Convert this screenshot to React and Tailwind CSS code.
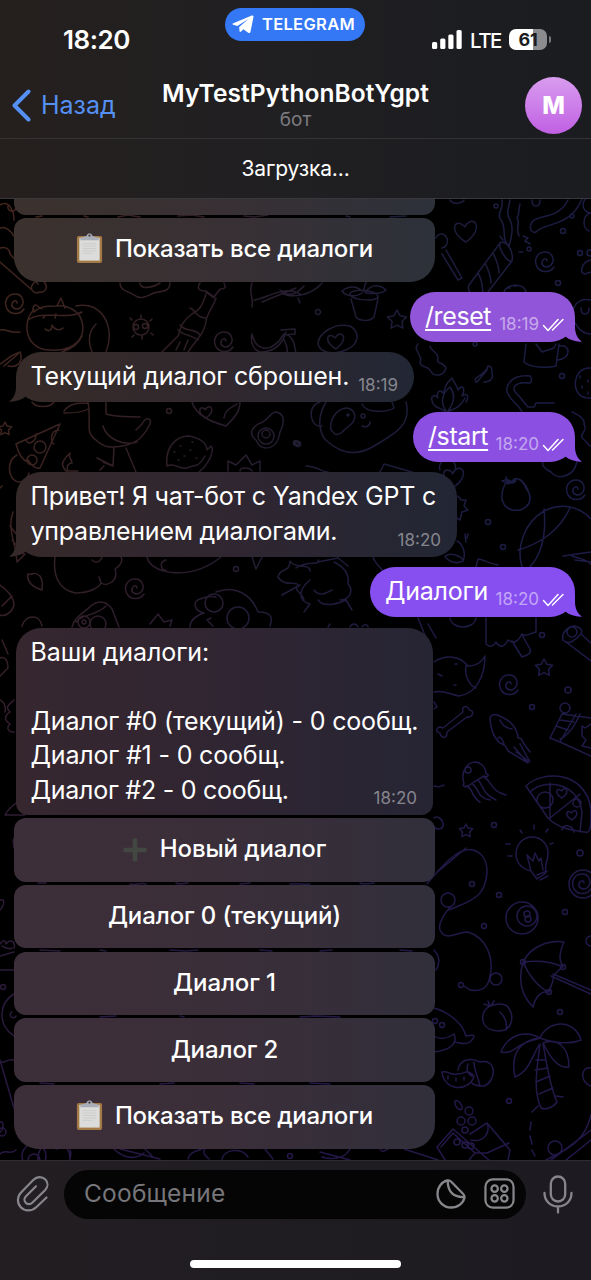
import React from "react";

const star = (x, y, r) => {
  const p = [];
  for (let i = 0; i < 10; i++) {
    const a = (i * Math.PI) / 5 - Math.PI / 2;
    const q = i % 2 ? r * 0.52 : r;
    p.push(`${(x + q * Math.cos(a)).toFixed(1)} ${(y + q * Math.sin(a)).toFixed(1)}`);
  }
  return `M${p.join("L")}Z`;
};
const spiral = (x, y) =>
  `M${x + 9} ${y + 5}c-4 6-13 6-17 0c-4-8 1-15 8-15c8 0 10 9 6 13c-4 4-10 1-9-3c1-4 5-4 5-1`;
const heart = (x, y, s) =>
  `M${x} ${y + s}C${x - s * 1.7} ${y} ${x - s} ${y - s * 1.3} ${x - s * 0.1} ${y - s * 0.4}C${x + s * 0.6} ${y - s * 1.6} ${x + s * 1.8} ${y - s * 0.3} ${x} ${y + s}Z`;
const dot = (x, y, r = 2.5) => `M${x - r} ${y}a${r} ${r} 0 1 0 ${2 * r} 0a${r} ${r} 0 1 0 ${-2 * r} 0`;

const doodles = [
  // left column, top
  "M0 205c10-6 14 8 14 15M0 228c6-2 10 2 14 8M8 206a4 4 0 1 0 8 2",
  "M0 248c6-2 10 2 10 6L38 284M0 262L32 290M32 290c-3-6 8-14 13-7c4 6-2 10-5 9c-4 2-7 0-8-2",
  spiral(15, 304),
  "M34 310C22 320 24 350 50 350C76 352 86 336 82 322C80 312 68 304 56 306C46 306 40 306 34 312C32 312 33 304 36 305L42 309M57 306L61 298L65 308M43 318l2-2M55 318l1-4M45 329c3 3 7 2 7-4c2 5 8 6 11 3M28 320c14-10 40 0 54-8",
  "M76 306c26-6 40 22 30 46M82 336C78 346 68 350 62 352M96 324c-8 8-8 18-4 28M64 352l2-4",
  "M0 330c6-2 10 4 20 2M0 364c6-3 8-8 20-12c4 10-3 16-12 14M18 354L4 366",
  dot(141, 327, 8), dot(136, 327), dot(145, 326), "M132 320l-2-2M141 318v-3M150 321l2-2M151 333l2 2M134 335l-2 2M142 336v3",
  "M120 283c0 8 8 8 14 12c8 6 14 0 20-2c10-2 16-2 16-10M140 283c0 6 10 6 20 0",
  "M200 283c-4 6 0 8 6 8l8 6l6-8c6 0 6-2 4-6M206 294c-4 12-6 16-14 20c-12 8-12 18-14 22l-16 16M216 298c-2 8-10 16-10 24c-2 12-10 18-18 30M190 308c6 2 6 10 16 10M180 325c6 8 14 2 20 10M178 330c6 6 12 4 20 10M180 342l-4 8M188 340l-4 10M206 292l8 6",
  spiral(224, 342), "M252 334c4 18 20 20 32 0M252 334c-2 10 2 16 8 18c12 0 22-6 26-20M281 330l14-1v5l-12 1M288 335c8 6 6 12 8 18M284 340c2 4 4 8 3 12",
  "M252 283c-4 10 2 14 0 24M254 300c10 0 30-16 46-6M262 302l34-14M280 290c10 8 16 4 24-4",
  "M282 293c10 6 30 2 40-10M298 298l2 5", dot(318, 312),
  "M350 294c0-6 26-4 28 2c2 6-26 5-28-2ZM351 299l5 18c3 4 14 5 18 0l4-18M362 291c-8-8-18-2-20 0c4 6 14 6 20 2M364 292c0-10 4-12 6-12M366 292c6-10 16-6 20-2c-4 4-12 4-20 3",
  star(397, 320, 10), "M318 344c0-10 16-22 32-18c10 6 10 18-4 24c-14 6-26 2-28-6Z", heart(336, 341, 8),
  heart(466, 231, 11), "M436 238a6 7 0 1 1 6 10M446 250l16 28l-4 2l-16-26",
  "M502 200c2 8-6 14-1 20c6 8 0 20 8 26M510 200c-2 10-4 14 0 20c4 6 2 16-1 26M520 204c-2 6 0 10-3 14c4 6-2 8 2 18",
  "M532 222c-4 6 0 12 4 10c8-10 34-4 46-33M532 222c6-8 26-2 36-22M450 200c4 6 14 2 14 0M532 200c0 8 8 8 8 0",
  dot(496, 206, 2), dot(563, 231), dot(572, 216, 2), dot(558, 283), dot(591, 205, 8), "M591 213c-10 2-8 16-2 18",
  "M500 243c6-4 14 8 12 18c-4 2-14-12-12-18ZM500 243l-31 42c-3 6 5 13 10 14M512 261l-24 31M493 253c2 4 6 12 6 20M485 263c3 6 6 12 6 20M478 273c4 6 4 12 5 20M523 236l5 2l-3 3l5 3M500 236l3 4M519 252h4",
  spiral(545, 262), dot(529, 249, 2), dot(580, 253), dot(590, 253, 3), "M591 260c-10 2-12 14-6 14l6-2", "M504 292c2-8 20-10 22 0M508 288h2M514 286h2",
  "M591 300c-16-4-24 14-14 26c4 6 10 8 14 8M581 308c0 8 8 8 8 0",
  // left column, middle
  "M16 444L60 424l-20 44c-6 2-12-8-12-8M16 444c2 8 6 16 12 18M26 440c2 6 10 2 10-6M59 430c-10 0-8 14-5 14", dot(40, 447, 6), dot(32, 460, 5),
  "M17 455c-8 4-10 16-4 24c6 6 14 2 16-6", star(5, 429, 7), "M64 411c6-8 14-8 24-8M64 413c8 0 18 0 24-4M88 402c4 20-4 30 8 38c8 8 16 8 26 6c12-2 20-6 28-22c2-6-4-8-8 0l-6 6M106 402v12c14 4 26 2 34 3M103 426c4 14 22 20 34 16M114 448l-1 18l-16-8M113 466l-10-4M126 448l10 24M104 466l-4 4",
  "M66 471c-6-6-4-10 4-18c-2 6 2 6 2 10c-4 0-6 4-4 8M66 471h12", "M32 402c4 6 18 6 22 0",
  "M167 466c-2-18 8-30 22-30c12 2 18 8 18 14l4-4c4 4-2 18-12 26M167 466c8-4 12 4 20 2c6-4 10 2 18-12M174 452h1M180 446h1M190 450h1M184 456h1M196 458h1M176 440h1M192 442h1M178 460h1",
  "M256 440c-8-6-4-12 2-16c10-2 12-12 18-12c10 2 8 12 4 20c-2 12-8 16-14 16c-6 0-8-4-10-8Z", dot(266, 436, 8), dot(266, 434, 4), dot(169, 411), dot(297, 443, 2),
  "M192 402c4 14 20 20 34 24c8-8 14-14 14-24M224 418c0-8 10-12 13-14", heart(206, 412, 6),
  "M228 471v-10l8 4l10-10l6 10l8-4v10M240 471c0-4 10-4 12 0",
  "M320 402c-14 4-10 26 2 24M326 402c-12 20-4 36 2 40c14 12 30 14 46 4c20-12 38-20 32-44M331 430c-2-10 6-22 16-22c10 2 10 12 2 18c-6 4-8 10-14 8ZM362 404c4 10 26 8 32 4l-2-6M362 426c4 2 8 0 8-4", dot(348, 415, 1), dot(363, 416, 2), dot(296, 443),
  "M418 344c-6 6 6 12 2 18c0 6 8 4 10 8c4 8 14 6 16-2c-4-8-10-2-8-10c0-6-8-8-8-12",
  "M432 400c-2-4 4-6 6-2c-2-6 2-10 6-4c0-10 6-14 8-16c4 8 6 10 6 12c4-6 8-2 4 6c4-4 8 0 4 6M446 411c-6-8-4-18 4-24c6 8 4 16-2 24M432 400c0 6 6 8 14 11M465 398c-4 8-8 10-16 13M430 416c4-4 20-6 34 0",
  "M476 382c-4-6 10-6 12-16c4 0 4 4 4 8c2 4-2 8-8 8M477 382l10-12", dot(562, 376), dot(475, 344, 2),
  "M526 344l-2 18c6 6 24 6 32 4l3-22M560 346c10-2 12 12-2 14M536 344l6 8l12-4l2-4",
  "M530 376c-20-2-26 12-22 18c4 8 12 12 14 18M530 383c-16-2-20 6-12 12c4 4 6 8 10 12h6l2-4h18M530 376c2 2 2 5 0 7",
  "M591 368c-18-2-22 28-4 30h4M580 376v2M588 380v2M582 386v2M588 392v2",
  "M572 412c4 2 14 6 12 12c4 8-4 8-2 14c6 4 6 8 9 8", dot(298, 444),
  "M306 466c10 0 16 6 22 6M380 472l4-8l28 8M440 470a8 8 0 1 1 12 4M543 462c-2 4 4 8 8 10c6 8 22 6 26-10",
  // middle band
  "M0 488l2-2M13 512c-6 16 2 28 4 50l8-8M10 526l14 18M12 540l12 14",
  "M55 557c-2 16 2 32 20 36c16 0 24-6 26-10c6 4 18-2 14-14c6-4 8-8 6-12M101 583l-2-6M92 560c4 4 8 2 10-3",
  "M42 590c-8-2-16-8-14-16c6 2 4-4 12 2c4 6 2 8 2 14Z", spiral(135, 589), "M0 585c6 4 14 12 14 20c-2 8-10 12-14 10M2 606l10-10",
  "M147 557c4 18 44 24 74 0M166 560c-8 2-4 12 0 10M252 557l4 12l6-12", dot(236, 569),
  "M278 577c2-10 12-4 12-16c4 8 20 2 20 10M278 577c6 10 18 4 20 8c-4 6 2 6 6 14M300 585l-18 10",
  "M72 627c2-10 12-14 20-22c8-6 16-2 20 4l7 18M76 622c6-8 20-6 30-16", dot(84, 622, 6), dot(98, 624, 8), dot(84, 622, 2),
  "M22 626c4-12 18-12 20 0M150 624l8-10l6 8l8-2l-2 6M190 627c0-8 8-12 14-14c-10-2-12-12-4-14c10-4 14-2 16-2M216 592c20-8 36 4 42 20c16 0 14 8 12 14M213 626l-6-6l4-2", dot(214, 603, 9), dot(238, 618, 11),
  "M296 568c10-8 26-2 22-8M310 580c-10 8-14 20 0 24l-6 8M318 600c6 8 20 4 28 0l6 10M340 600c10 0 14-10 8-16c2-12-6-18-14-22M318 562l20-4l10 8M314 590c6 8 14 2 18 0M374 557c-4 0 10 16 16 20",
  heart(454, 477, 10), "M458 496l3 4l5 0l-2 6l4 4l-6 2l-2 8l-5-3", "M457 541c4 2 10 10 6 20c-8 4-14 0-18-4M445 556c6-4 16 0 18 4M465 534l1 8M468 534l-1 4",
  "M506 482c-10 20 0 30 14 28c12-4 12-14 6-22c-4-10-12-12-14-6c-6-4-6-2-10-1c6 4 12 2 14 0ZM508 484l-2-7M512 482c4-6 10-4 16 8", spiral(576, 490), dot(488, 522), dot(503, 547),
  "M522 567c-6-20 2-44 22-56c16-8 34-6 47 8M544 509c2 20 0 42-14 58M570 508c-10 22-30 36-52 42M591 552l-28 4M575 560l16 2M572 556c4 2 12 2 19 8",
  "M476 567l2-8c4 0 10 4 20 6M450 618c2 12 24 12 26 0M486 618v26c4 4 8 2 10-2c4 6 8 6 12-2c6 4 10 2 14-6c4 4 10-2 14-2V618M512 641l10 16c6-2 10-4 8-8l-8-14", dot(542, 635),
  "M563 640c-2-8 6-14 12-14c6 2 8 4 6 8M563 640c6 6 12 0 18-6M566 642l25 19M581 634l10 9", dot(572, 632, 5),
  "M328 627l2-3M350 627c2-4 6-4 8 0M362 627c2-4 6-2 6 0M418 618l8 20M428 624l8 14",
  // right column, lower
  "M434 662c12-8 26-6 34 4c8 0 14-4 17-10c0 18-8 38-26 40c-10-2-16-6-25-4M466 666c-2 10 4 20 10 22M455 664h2M454 685h2M438 674l4 2",
  star(544, 668, 9), spiral(509, 685), dot(568, 690, 3), dot(532, 707), "M434 702l3 5l-3 2",
  "M443 728l20-16c-2-8 6-6 6-2c6 0 4 8-2 7l-20 15c0 8-6 6-7 1c-6-1-3-8 3-5Z",
  "M490 718c2-8 14 0 20 4c6 6 8 10 8 16c4 0 4 2 6 6l6 8M490 718c0 10 4 20 10 25c6 2 6 4 8 8l20 12l-14-16M500 720c2 6 6 8 12 9M498 738c2-2 4 0 6 6M516 752l14 10M520 744l10 18",
  "M550 738l12-24l29 4M550 738l10 4l16-28M560 742l31 14M556 726l12 4M560 720l14 2M580 714c-4 10-12 22-20 25M591 724l-6 4l-3-2v10l4 4l-4 6l9 2", dot(565, 708, 5),
  "M434 818c2-2 10 0 9 8c-1 4-8 4-9 0M434 786c6 2 8 0 10-1",
  "M464 784c-4-14 4-22 12-22c8 2 10 8 10 12c4 0 2 4-2 2l-10 6l-6 4c-4 2-6-1-4-2ZM466 786c8 2 4 10 14 16M472 784c8 4 4 14 18 16M478 780c6 6 4 14 18 20M484 777c8 4 6 14 22 18", dot(468, 770, 3),
  "M526 786c16-16 60-16 65 24v10c0 8-2 14-6 12M526 786l4 6c14-14 48-10 52 20l-2 20M530 792l18 26c10 10 22 12 36 14M550 783v35l30-24M574 832c-2-8-12-8-12-2", dot(545, 800, 8), heart(562, 793, 5), heart(572, 815, 5), dot(577, 803, 4),
  star(466, 831, 7), dot(494, 825), dot(580, 853, 3),
  "M516 855c0-12 8-18 16-18c10 0 16 8 16 16c0 10-4 10-2 20l-9 6l-6-8c-8-2-14-6-15-16ZM531 871l-4-16l6 6l2-8l4 8l2-3l2 12M537 875l10-4M540 880l8-4M534 829v-4M546 832l2-3M522 833l-2-3M510 844h-4M512 856h-4M550 844l3-1",
  spiral(582, 884), dot(583, 884, 14), "M427 884c10-12 30-38 46-34c20 6 16 36 4 46c-10 8-20 10-28 14M428 880l38-32", dot(448, 900, 7), dot(472, 884), dot(499, 895),
  dot(522, 918, 16), dot(527, 916, 10), dot(527, 914, 3), dot(528, 919, 3), dot(484, 926), dot(565, 912), dot(591, 941, 5),
  "M454 904c-10 8-16 20-14 26c6 12 16 2 28 2c20 6 26 28 22 44c-2 12-8 16-20 14l-6-4", dot(496, 979, 6), dot(461, 985),
  "M523 962c8-16 26-22 41-20c-4 8-6 18-1 24l-10 10c2 4-2 8-4 16c-8-2-14 6-16 15c-10-10-16-24-10-45ZM523 962c18-2 30 0 40 5M523 962c6 14 16 26 26 30M551 976l40 18M553 974l38 16", dot(523, 962), dot(563, 967), dot(549, 992),
  "M490 1006c-10 4-12 24 8 25c16 0 16-16 10-24c-4-4-10-4-18-1ZM490 1006l-6-2M490 1006l-2-5M491 1006l3-5M500 1012c4 4 8 10 6 18", dot(560, 1012),
  "M434 1008c14 4 28 14 32 28c10-2 10 0 4 6c-6 4-12 0-16 0M434 1036c6 4 14 2 20-2c4 10-4 16-20 18M434 950c6 6 6 14 2 20", dot(442, 1025), dot(435, 1021),
  "M442 1072c6-2 8 4 16 2c8 0 8-6 16 2c-4 16-30 16-32-4ZM458 1070c2-12 14-12 22-8c18-4 16 20 4 24c-4 0-10 0-12-3M474 1062c0 8 4 14 6 24M468 1064c-2 6 0 10 4 12M448 1076v3M456 1078v3M464 1077v3",
  "M540 1038c-14-8-32-4-39 14c10 2 14-4 20-7c6-4 12-4 19-7M540 1038c-20 2-30 16-25 39c14-6 16-18 24-32M540 1038c8-18 34-20 41 2c-10 4-26 4-41-2M543 1043c14-6 26 4 26 24c-12 2-20-12-26-24M540 1044c-2 20-8 44 1 64c4 2 12 0 16-6c-8-18-10-38-14-58M536 1060l9 0M535 1070l13-2M536 1082l14-6M539 1094l14-6M556 1096l7 1M538 1106l-6 6",
  "M531 1122l-1 8M530 1136l2 8M532 1150l3 6M591 1068c-12-2-10 16 0 18", dot(509, 1101),
  "M455 1101c3-2 8 4 7 8c-4 2-8-4-7-8Z", dot(469, 1111, 4), dot(461, 1121, 4), dot(472, 1121, 4), dot(465, 1130, 3), dot(457, 1142, 3), dot(465, 1145, 3), dot(471, 1146, 3),
  "M437 1147l16-18l36 31M437 1147l8 13M441 1147l12-14l22 20l-6 7M470 1134l17-11l23 27l-2 10M487 1123c4 10-4 20-16 17M475 1153h12l22-10",
  "M546 1160c30-14 40-24 45-45M551 1160l40-30M566 1160l25-20", dot(555, 1148, 7),
  // left column, lower
  "M0 658c6-2 8 4 8 10l-8 8M2 640l6 14M14 700c-4 4-10 6-4 12c-6 4-6 8 0 12c-4 4-2 8 4 8M0 700c4 2 6 6 5 12",
  "M5 815c2-4 8-10 14-14M5 815h20M0 900c6-2 4 6 0 10M14 838c-2 4 0 6 0 10", "M0 944c4-6 6-2 6 0c4-6 10-2 8 4M0 956l14-4M0 970h14M2 946c4 2 8 4 10 2",
  dot(3, 987), "M14 994c-14 8-18 30 0 42M12 1012a3 3 0 1 0 4 4M0 1062c4 2 8-4 14-2M0 1060l14 48M0 1122c4-2 4 8 0 10", dot(2, 1132, 4),
  "M0 1154c6-6 10 2 16-4M56 1149c4 0 6-3 4-1M70 1150c2 4 0 6 0 9M188 1159c2-8 10-8 14-10M205 1149c-4 4 4 10 4 10M265 1149l8 10", dot(34, 1156, 12), dot(34, 1160, 6), dot(54, 1158, 16), dot(290, 1156),
  "M114 1149c8 8 20 12 30 4M120 1149l40 10M145 1149l8 8M222 1159c2-10 20-12 26-2M350 1149c-4 8-16 12-28 8M380 1149c2 4 4 2 8 0M404 1149l34 11M320 1152l30 8",
  "M38 883h8M130 884c6 2 10-2 16 0M176 883c4 2 8 0 12 0M240 884l10-1M290 884c8-1 14 1 20 0M360 883c4 2 10 0 14 0",
  "M40 950l20 1M100 950l6 1M170 950l16 1l12-1M260 950l12 1M320 951l12-1M400 950l12 1M100 1017l16-1M180 1016l4 1M300 1017l16-1l24 1M40 1083l14 1M160 1084l14-1M240 1083l14 1M310 1083l20 1",
  "M36 217l6-1M84 216l4 1M118 217l10-2l12 2M178 216l14-1l12 2M244 216l10 1l14-2M346 216l4 1M390 217l16-1",
];

function Wallpaper() {
  return (
    <svg className="absolute inset-0 h-full w-full" viewBox="0 199 591 961" fill="none" aria-hidden="true">
      <defs>
        <linearGradient id="line" gradientUnits="userSpaceOnUse" x1="0" y1="199" x2="591" y2="330">
          <stop offset="0" stopColor="#43261c" />
          <stop offset="0.35" stopColor="#2e1e26" />
          <stop offset="0.65" stopColor="#1d1c38" />
          <stop offset="1" stopColor="#1b1c46" />
        </linearGradient>
        <linearGradient id="tint" x1="0" y1="0" x2="0" y2="1">
          <stop offset="0.3" stopColor="#26164a" stopOpacity="0" />
          <stop offset="1" stopColor="#26164a" stopOpacity="0.8" />
        </linearGradient>
        <mask id="ink" maskUnits="userSpaceOnUse" x="0" y="199" width="591" height="961">
          <path d={doodles.join("")} stroke="#fff" strokeWidth="1.5" strokeLinecap="round" strokeLinejoin="round" />
        </mask>
      </defs>
      <g mask="url(#ink)">
        <rect x="0" y="199" width="591" height="961" fill="url(#line)" />
        <rect x="0" y="199" width="591" height="961" fill="url(#tint)" />
      </g>
    </svg>
  );
}

function Checks() {
  return (
    <svg className="mb-[10px] h-[14px] w-[23px]" viewBox="0 0 23 14" fill="none" stroke="#fff" strokeWidth="1.5" strokeLinecap="round" strokeLinejoin="round">
      <path d="M1.5 7.5L6 12.5L16 1.5M10.5 12L21 1.5" />
    </svg>
  );
}

function Outgoing({ text, time, color, fill, width, tracking, link }) {
  return (
    <div className={`relative mr-[16px] flex h-[50px] items-end self-end rounded-[25px] pl-[15px] ${width} ${color}`}>
      <svg className="absolute -right-[7px] bottom-0 h-[24px] w-[24px]" viewBox="0 0 24 24">
        <path className={fill} d="M17 0V9C17 16 20 21 24 23.6C18 24 12 22 8 19L0 14Z" />
      </svg>
      <span className={`relative mb-[9px] text-[25px] leading-[34px] text-white ${tracking} ${link ? "underline decoration-[1.5px] underline-offset-[4px]" : ""}`}>{text}</span>
      <span className="relative mb-[6px] ml-auto text-[17px] leading-[24px] tracking-[0px] text-white/50">{time}</span>
      <span className="relative mr-[10px] ml-[3px]"><Checks /></span>
    </div>
  );
}

function Incoming({ lines, time, box, tail }) {
  return (
    <div className={`relative ml-[16px] flex flex-col bg-linear-to-r pl-[15px] ${box}`}>
      {tail && (
        <svg className="absolute -left-[7px] bottom-0 h-[24px] w-[24px]" viewBox="0 0 24 24">
          <path d="M7 0V9C7 16 4 21 0 23.6C6 24 12 22 16 19L24 14Z" fill={tail} />
        </svg>
      )}
      {lines.map(([t, tracking], i) => (
        <span key={i} className={`relative -ml-[0.5px] h-[34.6px] text-[25px] leading-[34.6px] whitespace-nowrap text-white ${tracking}`}>{t}</span>
      ))}
      <span className="absolute right-[16px] bottom-[5px] text-[17px] leading-[24px] text-white/45">{time}</span>
    </div>
  );
}

function Clipboard() {
  return (
    <svg className="mt-[-2px] mr-[12px] h-[31px] w-[27px]" viewBox="0 0 27 32">
      <rect x="0.5" y="3" width="26" height="28" rx="2" fill="#a37a45" />
      <rect x="3" y="5" width="21" height="23.5" fill="#dcdcda" />
      <path d="M6.5 11h14M6.5 13.5h14M6.5 16h14M6.5 18.500h14M6.5 21h10" stroke="#cbccca" strokeWidth="1" />
      <path d="M4 7.500V6C4 4.500 6 4 9 3.500C10 3.300 10.500 2.700 11 1.700C11.700 0 15.300 0 16 1.700C16.500 2.700 17 3.300 18 3.500C21 4 23 4.500 23 6V7.500Z" fill="#a9adb8" />
      <circle cx="13.500" cy="2.700" r="1.200" fill="#453d3b" />
    </svg>
  );
}

function Plus() {
  return (
    <svg className="mr-[13px] h-[24px] w-[24px]" viewBox="0 0 24 24">
      <path d="M12 0.500V23.500M0.500 12H23.500" stroke="#424741" strokeWidth="4.6" />
    </svg>
  );
}

function KeyButton({ icon, children, last, tone, tracking }) {
  return (
    <div className={`ml-[14px] flex h-[63.5px] w-[421px] shrink-0 items-center justify-center bg-linear-to-r text-[24px] font-medium whitespace-nowrap text-white ${tone} ${last ? "rounded-t-[12px] rounded-b-[25px]" : "rounded-[12px]"}`}>
      {icon}
      <span className={`-mt-px ${tracking}`}>{children}</span>
    </div>
  );
}

const warm = "from-[#3b322e] via-[#383034] to-[#2d313a]";
const plum = "from-[#3d2f39] via-[#3a2e39] to-[#312f3b]";

export default function App() {
  return (
    <div className="flex h-[1280px] w-[591px] flex-col overflow-hidden bg-black font-['Inter','Noto_Sans',sans-serif]">
      <header className="flex h-[199px] shrink-0 flex-col border-b border-[#39393d] bg-linear-to-r from-[#25201e] via-[#201f22] to-[#1a1c20]">
        <div className="grid h-[73px] shrink-0 grid-cols-[225px_140px_1fr]">
          <div className="pt-[24px] pl-[63px] text-[26px] leading-[32px] font-semibold tracking-[-0.5px] text-white">18:20</div>
          <div className="mt-[8px] flex h-[33px] items-center rounded-full bg-[#3478f6] pl-[7px]">
            <svg className="h-[19px] w-[22px]" viewBox="0 0 22 19">
              <path d="M1.300 8.200L19.800 0.500C21 0.100 21.700 0.700 21.500 1.800L18.500 16.800C18.200 18 17.200 18.400 16.200 17.700L11.400 14.200L9 16.500C8.300 17.200 7.600 17 7.500 16L7.200 12L16.500 4L5.300 11L1.200 9.700C0.300 9.300 0.300 8.600 1.300 8.200Z" fill="#fff" />
            </svg>
            <span className="ml-[8px] text-[16.500px] font-semibold tracking-[0.300px] text-white">TELEGRAM</span>
          </div>
          <div className="flex items-start pt-[29px] pl-[67px]">
            <svg className="mt-[1px] h-[19px] w-[30px]" viewBox="0 0 30 19" fill="#fff">
              <rect x="0" y="12" width="5.200" height="7" rx="1.500" />
              <rect x="8.200" y="8.500" width="5.200" height="10.500" rx="1.500" />
              <rect x="16.300" y="4.500" width="5.200" height="14.500" rx="1.500" />
              <rect x="24.500" y="0" width="5.200" height="19" rx="1.500" />
            </svg>
            <span className="ml-[8px] w-[32px] text-[20.500px] leading-[23px] font-medium tracking-[-1.500px] text-white">LTE</span>
            <div className="ml-[7px] flex h-[21px] w-[38px] items-center justify-center rounded-[7px] bg-linear-to-r from-white from-62% to-[#8c8c8e] to-62% text-[18px] leading-[21px] font-bold tracking-[-0.300px] text-[#1b1c20]">61</div>
            <div className="mt-[7px] ml-[2px] h-[7px] w-[2px] rounded-r-full bg-[#77787b]" />
          </div>
        </div>
        <div className="grid h-[66px] shrink-0 grid-cols-[150px_1fr_150px] border-b border-[#333336]">
          <div className="flex items-start pt-[15px] pl-[12px] text-[#5590f4]">
            <svg className="mt-[1px] h-[33px] w-[20px]" viewBox="0 0 20 33" fill="none" stroke="currentColor" strokeWidth="4" strokeLinecap="round" strokeLinejoin="round">
              <path d="M16.500 2.500L2.500 16.500L16.500 30.500" />
            </svg>
            <span className="ml-[9px] text-[25px] leading-[34px] tracking-[0px]">Назад</span>
          </div>
          <div className="flex flex-col items-center whitespace-nowrap">
            <span className="mt-[4px] text-[24.500px] leading-[32px] font-semibold tracking-[0.080px] text-white">MyTestPythonBotYgpt</span>
            <span className="text-[19px] leading-[22px] text-[#7d7c80]">бот</span>
          </div>
          <div className="flex justify-end pt-[4px] pr-[9px]">
            <div className="flex h-[57px] w-[57px] items-center justify-center rounded-full bg-linear-to-b from-[#d99cee] to-[#c05fe3] text-[24px] font-extrabold text-white">M</div>
          </div>
        </div>
        <div className="flex flex-1 items-center justify-center text-[21px] tracking-[-0.150px] text-white">Загрузка...</div>
      </header>

      <main className="relative h-[961px] shrink-0 overflow-hidden">
        <Wallpaper />
        <div className="relative -mt-[47.500px] flex flex-col">
          <KeyButton tone={warm}>{""}</KeyButton>
          <div className="h-[3px]" />
          <KeyButton tone={warm} last icon={<Clipboard />} tracking="tracking-[-0.200px]">Показать все диалоги</KeyButton>
          <div className="h-[10.500px]" />
          <Outgoing text="/reset" time="18:19" link width="w-[165px]" color="bg-[#9055d8]" fill="fill-[#9055d8]" tracking="tracking-[-0.400px]" />
          <div className="h-[10px]" />
          <Incoming tail="#362b28" time="18:19" box="h-[50px] w-[398px] rounded-[25px] pt-[7px] from-[#362b28] via-[#31282e] to-[#222735]" lines={[["Текущий диалог сброшен.", "tracking-[-0.150px]"]]} />
          <div className="h-[10px]" />
          <Outgoing text="/start" time="18:20" link width="w-[162px]" color="bg-[#8b50e2]" fill="fill-[#8b50e2]" tracking="tracking-[-0.400px]" />
          <div className="h-[10px]" />
          <Incoming tail="#36292a" time="18:20" box="h-[85px] w-[441px] rounded-[25px] pt-[7px] from-[#36292a] via-[#2f2631] to-[#222634]" lines={[["Привет! Я чат-бот с Yandex GPT с", "tracking-[-0.230px]"], ["управлением диалогами.", "tracking-[-0.230px]"]]} />
          <div className="h-[10px]" />
          <Outgoing text="Диалоги" time="18:20" width="w-[205px]" color="bg-[#874ef0]" fill="fill-[#874ef0]" tracking="tracking-[-0.250px]" />
          <div className="h-[10.500px]" />
          <Incoming time="18:20" box="h-[187.500px] w-[417px] rounded-t-[25px] rounded-b-[12px] pt-[7px] from-[#36272f] via-[#302532] to-[#262534]" lines={[["Ваши диалоги:", "tracking-[-0.100px]"], ["", ""], ["Диалог #0 (текущий) - 0 сообщ.", "tracking-[-0.170px]"], ["Диалог #1 - 0 сообщ.", "tracking-[-0.170px]"], ["Диалог #2 - 0 сообщ.", "tracking-[-0.250px]"]]} />
          <div className="mt-[3px] flex flex-col gap-[3.250px]">
            <KeyButton tone={plum} icon={<Plus />} tracking="tracking-[-0.100px]">Новый диалог</KeyButton>
            <KeyButton tone={plum} tracking="tracking-[-0.100px]">Диалог 0 (текущий)</KeyButton>
            <KeyButton tone={plum} tracking="tracking-[-0.100px]">Диалог 1</KeyButton>
            <KeyButton tone={plum} tracking="tracking-[-0.100px]">Диалог 2</KeyButton>
            <KeyButton tone={plum} last icon={<Clipboard />} tracking="tracking-[-0.200px]">Показать все диалоги</KeyButton>
          </div>
        </div>
      </main>

      <footer className="flex h-[120px] shrink-0 flex-col border-t border-[#2e2c31] bg-linear-to-r from-[#221e22] to-[#1d1b21]">
        <div className="mt-[9px] flex h-[49px] shrink-0 items-center">
          <svg className="mt-[-3px] ml-[16px] h-[38px] w-[33px]" viewBox="0 0 33 38" fill="none" stroke="#87868a" strokeWidth="2.200" strokeLinecap="round" strokeLinejoin="round">
            <path d="M30.500 23.500L20.500 33C15.500 37.800 8.500 37.300 4.800 33.300C0.800 29 1 22.500 5.300 18.200L17.500 5.800C21 2.300 26 2.200 29.200 5.300C32.500 8.500 32 13 29 16.200L16.500 28.500C14.500 30.500 11.500 30.700 9.700 28.700C7.800 26.700 8.200 24 10 22.200L20 12.300" />
          </svg>
          <div className="ml-[15px] flex h-[49px] w-[462px] items-center rounded-full bg-[#050505] pl-[20px]">
            <span className="-mt-[2px] text-[24.500px] tracking-[0.200px] text-[#77767a]">Сообщение</span>
            <svg className="mt-[-2px] ml-auto h-[30px] w-[30px]" viewBox="0 0 30 30" fill="none" stroke="#87868a" strokeWidth="2.300" strokeLinecap="round" strokeLinejoin="round">
              <path d="M11.500 1.500C6 2.500 1.500 8 1.500 15C1.500 22.500 7.500 28.500 15 28.500C22 28.500 27.500 24 28.500 18.500C28.700 17 28 15.700 27 14.700L15.500 3C14.300 1.800 13 1.200 11.500 1.500Z" />
              <path d="M11.800 1.800C11.500 12 17 18.500 28 18" />
            </svg>
            <svg className="mt-[-2px] mr-[11px] ml-[18px] h-[31px] w-[31px]" viewBox="0 0 32 32" fill="none" stroke="#87868a" strokeWidth="2.300">
              <rect x="1.500" y="1.500" width="29" height="29" rx="7.500" />
              <circle cx="11" cy="11" r="3.300" />
              <circle cx="21" cy="11" r="3.300" />
              <circle cx="11" cy="21" r="3.300" />
              <circle cx="21" cy="21" r="3.300" />
            </svg>
          </div>
          <svg className="mt-[-1px] ml-[17px] h-[39px] w-[30px]" viewBox="0 0 30 39" fill="none" stroke="#87868a" strokeWidth="2.300" strokeLinecap="round">
            <rect x="7.800" y="1.500" width="14.400" height="25" rx="7.200" />
            <path d="M1.500 18C1.500 26 7.500 31.500 15 31.500C22.500 31.500 28.500 26 28.500 18M15 31.500V37.500" />
          </svg>
        </div>
        <div className="mt-[41px] ml-[190px] h-[8px] w-[211px] shrink-0 rounded-full bg-white" />
      </footer>
    </div>
  );
}
